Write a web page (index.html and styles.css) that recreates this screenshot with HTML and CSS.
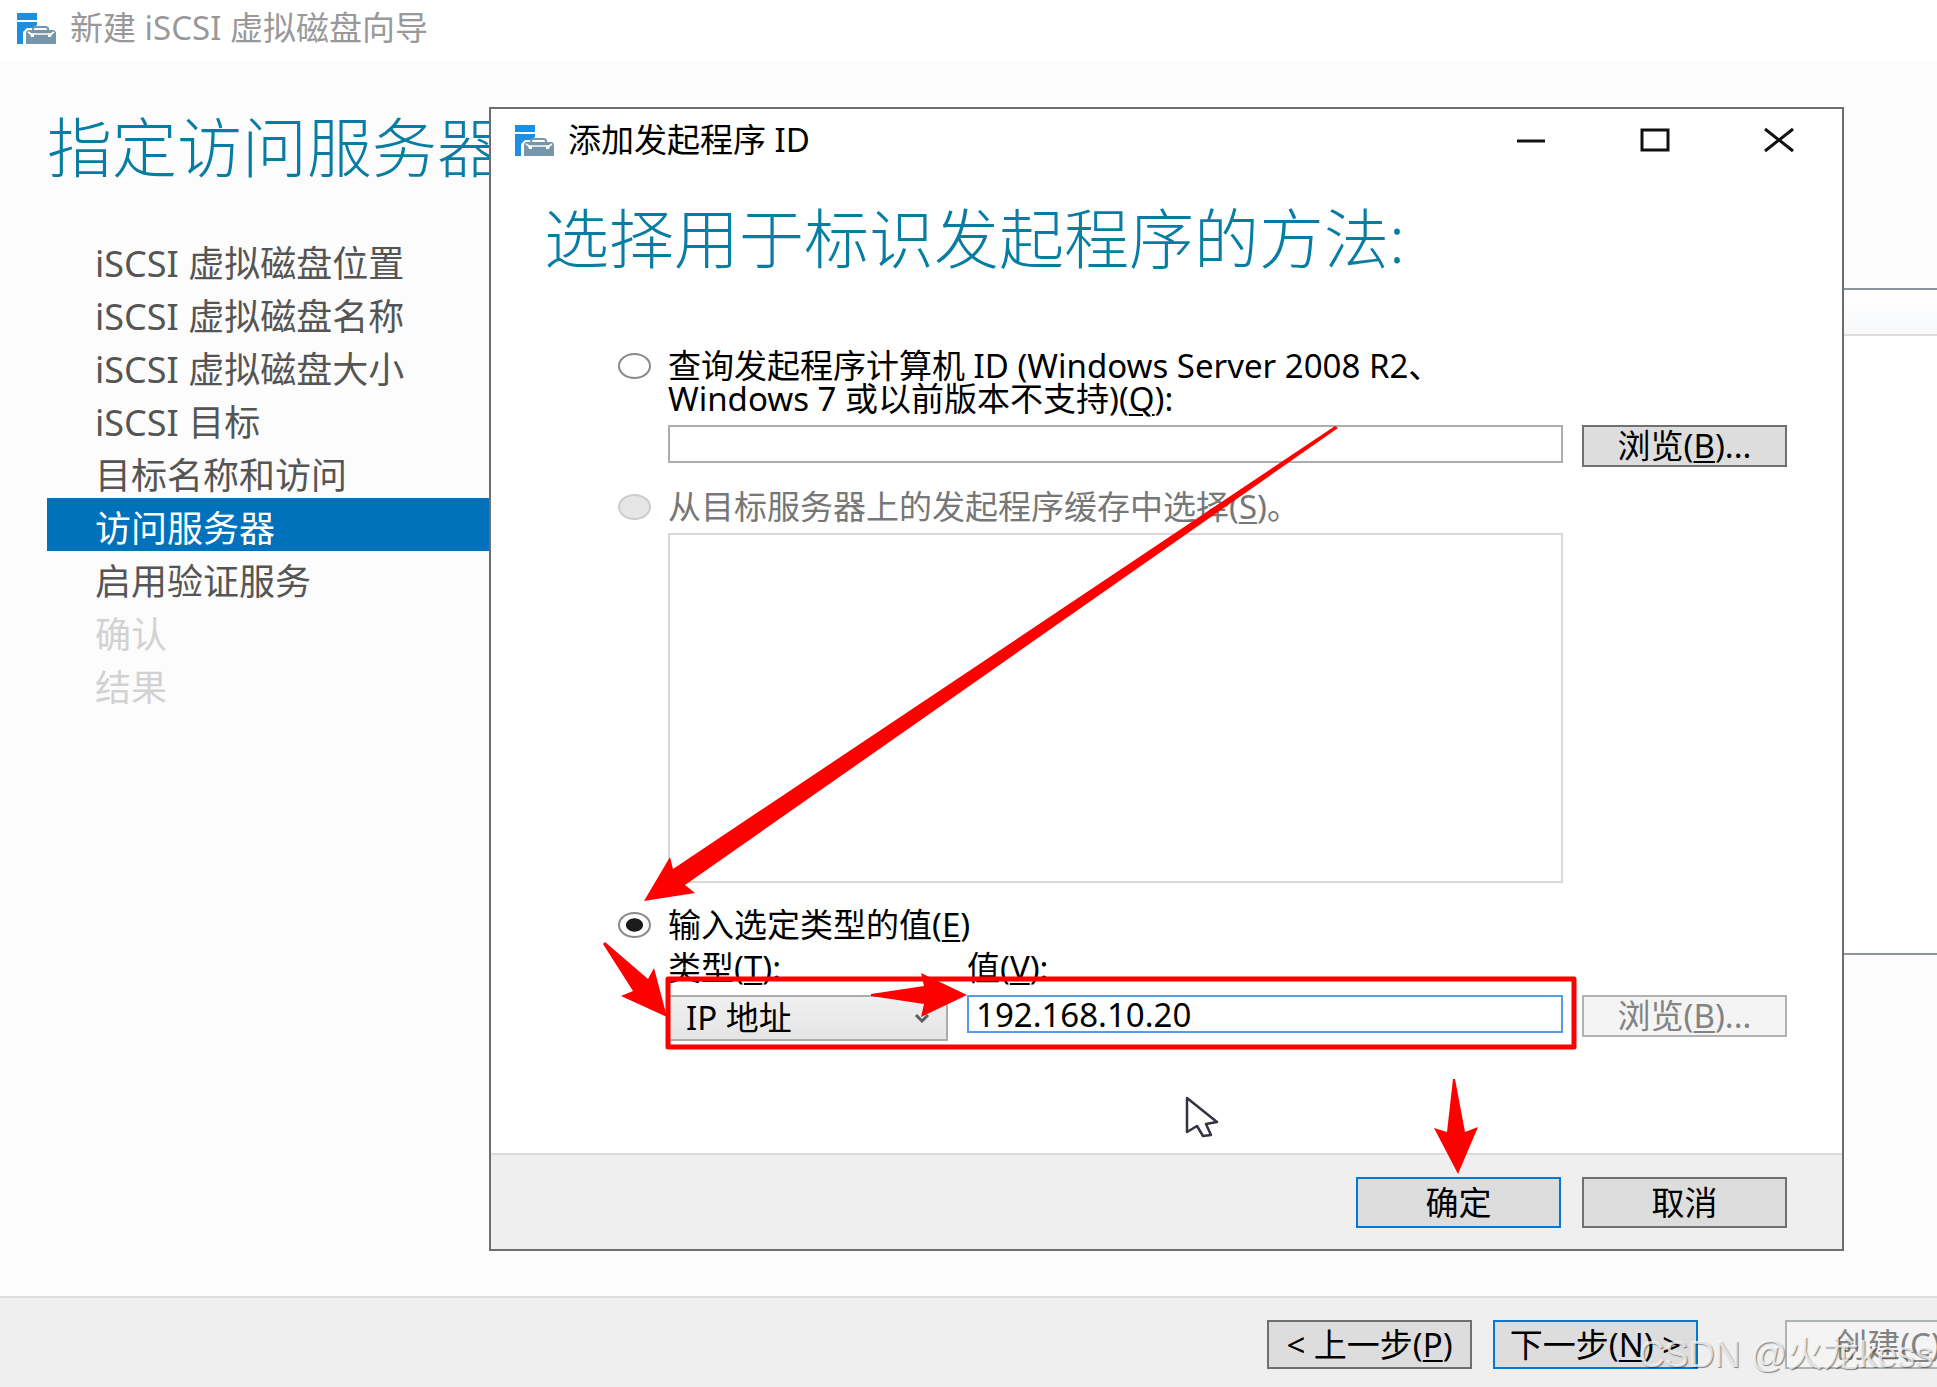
FILE: index.html
```html
<!DOCTYPE html>
<html lang="zh-CN">
<head>
<meta charset="utf-8">
<title>新建 iSCSI 虚拟磁盘向导</title>
<link rel="stylesheet" href="styles.css">
</head>
<body>
<svg class="defs" aria-hidden="true">
  <symbol id="server" viewBox="0 0 39 31">
    <path fill="#1e8fe0" d="M0 0h20v7H0zM0 9h20v3l-4 3h-6l-4 4v12H0z"/>
    <path fill="none" stroke="#7896a9" stroke-width="2" d="M16 18v-3l2-1h11l2 1v3"/>
    <path fill="#7896a9" d="M11 17h26l2 2v12H9V19z"/>
    <path fill="none" stroke="#fff" stroke-width="1.6" d="M11 19l3 2h20l3-2"/>
    <path fill="#fff" d="M13 21h4v3h-3zM31 21h4l-1 3h-3z"/>
  </symbol>
</svg>
<div class="wizard">
  <header class="titlebar">
    <svg class="app-icon"><use href="#server"/></svg>
    <span>新建 iSCSI 虚拟磁盘向导</span>
  </header>
  <main class="wizard-body">
    <h1 class="heading">指定访问服务器</h1>
    <div class="columns">
      <nav class="steps">
        <a href="#">iSCSI 虚拟磁盘位置</a>
        <a href="#">iSCSI 虚拟磁盘名称</a>
        <a href="#">iSCSI 虚拟磁盘大小</a>
        <a href="#">iSCSI 目标</a>
        <a href="#">目标名称和访问</a>
        <a href="#" class="current" aria-current="step">访问服务器</a>
        <a href="#">启用验证服务</a>
        <a class="off">确认</a>
        <a class="off">结果</a>
      </nav>
      <section class="list"><div class="list-head"></div></section>
    </div>
  </main>
  <footer class="wizard-foot">
    <button class="btn">&lt; 上一步(<u>P</u>)</button>
    <button class="btn primary">下一步(<u>N</u>) &gt;</button>
    <button class="btn create" disabled>创建(<u>C</u>)</button>
  </footer>

  <div class="dialog" role="dialog" aria-labelledby="dialog-name">
    <header class="dialog-title">
      <svg class="app-icon"><use href="#server"/></svg>
      <span id="dialog-name">添加发起程序 ID</span>
      <div class="window-buttons">
        <button aria-label="最小化"><svg viewBox="0 0 30 26"><path d="M1 14h28"/></svg></button>
        <button aria-label="最大化"><svg viewBox="0 0 30 26"><path d="M2 3h26v20H2z"/></svg></button>
        <button aria-label="关闭"><svg viewBox="0 0 30 26"><path d="M1 2l28 22M29 2L1 24"/></svg></button>
      </div>
    </header>
    <form class="dialog-body">
      <h2 class="heading">选择用于标识发起程序的方法:</h2>
      <div class="option first">
        <input type="radio" name="method" id="query">
        <label for="query">查询发起程序计算机 ID (Windows Server 2008 R2、<br>Windows 7 或以前版本不支持)(<u>Q</u>):</label>
      </div>
      <div class="fields">
        <input class="box wide" type="text" aria-label="计算机 ID">
        <button type="button" class="btn small">浏览(<u>B</u>)...</button>
      </div>
      <div class="option second">
        <input type="radio" name="method" id="cache" disabled>
        <label for="cache">从目标服务器上的发起程序缓存中选择(<u>S</u>)。</label>
      </div>
      <div class="fields"><div class="cache-list"></div></div>
      <div class="option third">
        <input type="radio" name="method" id="manual" checked>
        <label for="manual">输入选定类型的值(<u>E</u>)</label>
      </div>
      <div class="fields captions">
        <label class="kind" for="kind">类型(<u>T</u>):</label>
        <label for="value">值(<u>V</u>):</label>
      </div>
      <div class="fields">
        <div class="kind">
          <select id="kind"><option>IP 地址</option></select>
          <svg class="chevron" viewBox="0 0 16 10"><path d="M2 2l6 6 6-6"/></svg>
        </div>
        <input class="box active" type="text" id="value" value="192.168.10.20">
        <button type="button" class="btn small" disabled>浏览(<u>B</u>)...</button>
      </div>
    </form>
    <footer class="dialog-foot">
      <button class="btn primary">确定</button>
      <button class="btn">取消</button>
    </footer>
    <svg class="marks" viewBox="491 109 1350 1140" aria-hidden="true">
      <rect x="668" y="979" width="906" height="68" fill="none" stroke="#f00" stroke-width="5" stroke-linejoin="round"/>
      <g fill="#f00">
        <path d="M644 901L670 857L673 869L1335 426L1338 428L685 885L695 893Z"/>
        <path d="M603 944L605 942L648 979L654 968L667 1017L621 996L633 991Z"/>
        <path d="M871 994L924 986L921 973L967 995L921 1017L924 1004L871 996Z"/>
        <path d="M1453 1079L1455 1079L1465 1132L1478 1127L1458 1174L1434 1128L1447 1132Z"/>
      </g>
      <path d="M1187 1098V1132L1197 1126L1203 1136L1211 1135L1206 1124L1217 1122Z" fill="#fff" stroke="#334" stroke-width="2.5" stroke-linejoin="round"/>
    </svg>
  </div>
  <div class="watermark">CSDN @火龙kess</div>
</div>
</body>
</html>
```
FILE: styles.css
```css
* { box-sizing: border-box; }
body {
  margin: 0;
  font: 33px/40px "Noto Sans", "Noto Sans CJK SC", sans-serif;
  color: #000;
}
button, input, select { font: inherit; color: inherit; }
.defs { position: absolute; width: 0; height: 0; }
.wizard {
  position: relative;
  display: flex;
  flex-direction: column;
  min-height: 100vh;
  overflow: hidden;
  background: #fcfcfc;
}
.titlebar {
  display: flex;
  align-items: center;
  gap: 14px;
  height: 62px;
  padding: 0 17px 6px;
  background: #fff;
  color: #999;
}
.app-icon { width: 39px; height: 31px; flex: none; }
.wizard-body { flex: 1; display: flex; flex-direction: column; padding: 45px 0 0 47px; }
.heading {
  margin: 0;
  font-size: 65px;
  line-height: 80px;
  font-weight: 300;
  color: #087da3;
  white-space: nowrap;
}
.columns { display: flex; padding-top: 46px; }
.steps { display: flex; flex-direction: column; flex: none; width: 500px; }
.steps a {
  height: 53px;
  padding: 4px 0 0 48px;
  font-size: 36px;
  line-height: 53px;
  color: #555;
  text-decoration: none;
}
.steps .current { background: #0072bc; color: #fff; }
.steps .off { color: #d2d2d2; }
.list {
  flex: 1;
  height: 667px;
  margin-top: 55px;
  border: 2px solid #8c939c;
  border-right: 0;
  background: #fff;
}
.list-head { height: 46px; border-bottom: 2px solid #dcdcdc; background: linear-gradient(#fff, #f6f8fa); }
.wizard-foot {
  display: flex;
  justify-content: flex-end;
  gap: 21px;
  height: 91px;
  margin-right: -53px;
  padding-top: 22px;
  border-top: 2px solid #dcdcdc;
  background: #efefef;
}
.wizard-foot .btn { height: 49px; }
.btn {
  flex: none;
  width: 205px;
  height: 51px;
  padding: 0;
  border: 2px solid #707070;
  background: #ddd;
  line-height: 36px;
  white-space: nowrap;
}
.btn.primary { border-color: #0078d7; }
.btn.small { height: 42px; }
.btn:disabled { border-color: #adb2b5; background: #f4f4f4; color: #838383; }
.create { margin-left: 66px; }
u { text-decoration-thickness: 2px; text-underline-offset: 3px; }

.dialog {
  position: absolute;
  top: 107px;
  left: 489px;
  right: 93px;
  border: 2px solid #6e6e6e;
  background: #fff;
}
.dialog-title { display: flex; align-items: center; gap: 14px; height: 62px; padding-left: 24px; }
.window-buttons { display: flex; gap: 64px; margin-left: auto; padding-right: 33px; }
.window-buttons button { width: 60px; height: 40px; padding: 0; border: 0; background: none; }
.window-buttons svg { display: block; width: 30px; height: 26px; margin: auto; fill: none; stroke: #111; stroke-width: 3; }
.dialog-body { padding: 27px 55px 112px 53px; }
.option { display: flex; gap: 17px; padding-left: 74px; line-height: 33px; white-space: nowrap; }
.option input {
  appearance: none;
  flex: none;
  width: 33px;
  height: 26px;
  margin: 4px 0;
  border: 2px solid #8a8a8a;
  border-radius: 50%;
  background: #fff;
}
.option input:checked { background: radial-gradient(ellipse 9px 7px, #1c1c1c 90%, #fff); }
.option input:disabled { border-color: #ccc; background: #e6e6e6; }
.option input:disabled + label { color: #777; }
.first { padding-top: 71px; }
.second { padding-top: 23px; }
.third { padding-top: 25px; }
.fields { display: flex; align-items: flex-start; gap: 19px; padding-left: 124px; }
.first + .fields { padding-top: 10px; }
.second + .fields { padding-top: 9px; }
.box {
  flex: 1;
  min-width: 0;
  height: 38px;
  padding: 0 7px;
  border: 2px solid #abadb3;
  background: #fff;
  line-height: 34px;
}
.box.active { border-color: #569de5; outline: 0; }
.cache-list { flex: 1; height: 350px; margin-right: 224px; border: 2px solid #d9d9d9; }
.captions { height: 53px; padding-top: 6px; }
.kind { position: relative; width: 280px; flex: none; }
.kind select {
  appearance: none;
  display: block;
  width: 100%;
  height: 46px;
  padding: 0 16px;
  border: 2px solid #acacac;
  border-radius: 0;
  background: linear-gradient(#f0f0f0, #e5e5e5);
}
.chevron { position: absolute; right: 18px; top: 18px; width: 16px; height: 10px; fill: none; stroke: #606060; stroke-width: 3; }
.dialog-foot {
  display: flex;
  justify-content: flex-end;
  gap: 21px;
  height: 96px;
  padding: 22px 55px 0 0;
  border-top: 2px solid #dcdcdc;
  background: #efefef;
}
.marks { position: absolute; top: 0; left: 0; width: 1350px; height: 1140px; pointer-events: none; }
.watermark {
  position: absolute;
  right: 4px;
  bottom: 12px;
  font: 36px/40px "Liberation Sans", "Noto Sans CJK SC", sans-serif;
  color: rgba(255, 255, 255, .75);
  text-shadow: 1px 1px 1px rgba(0, 0, 0, .45);
  white-space: nowrap;
}
```
